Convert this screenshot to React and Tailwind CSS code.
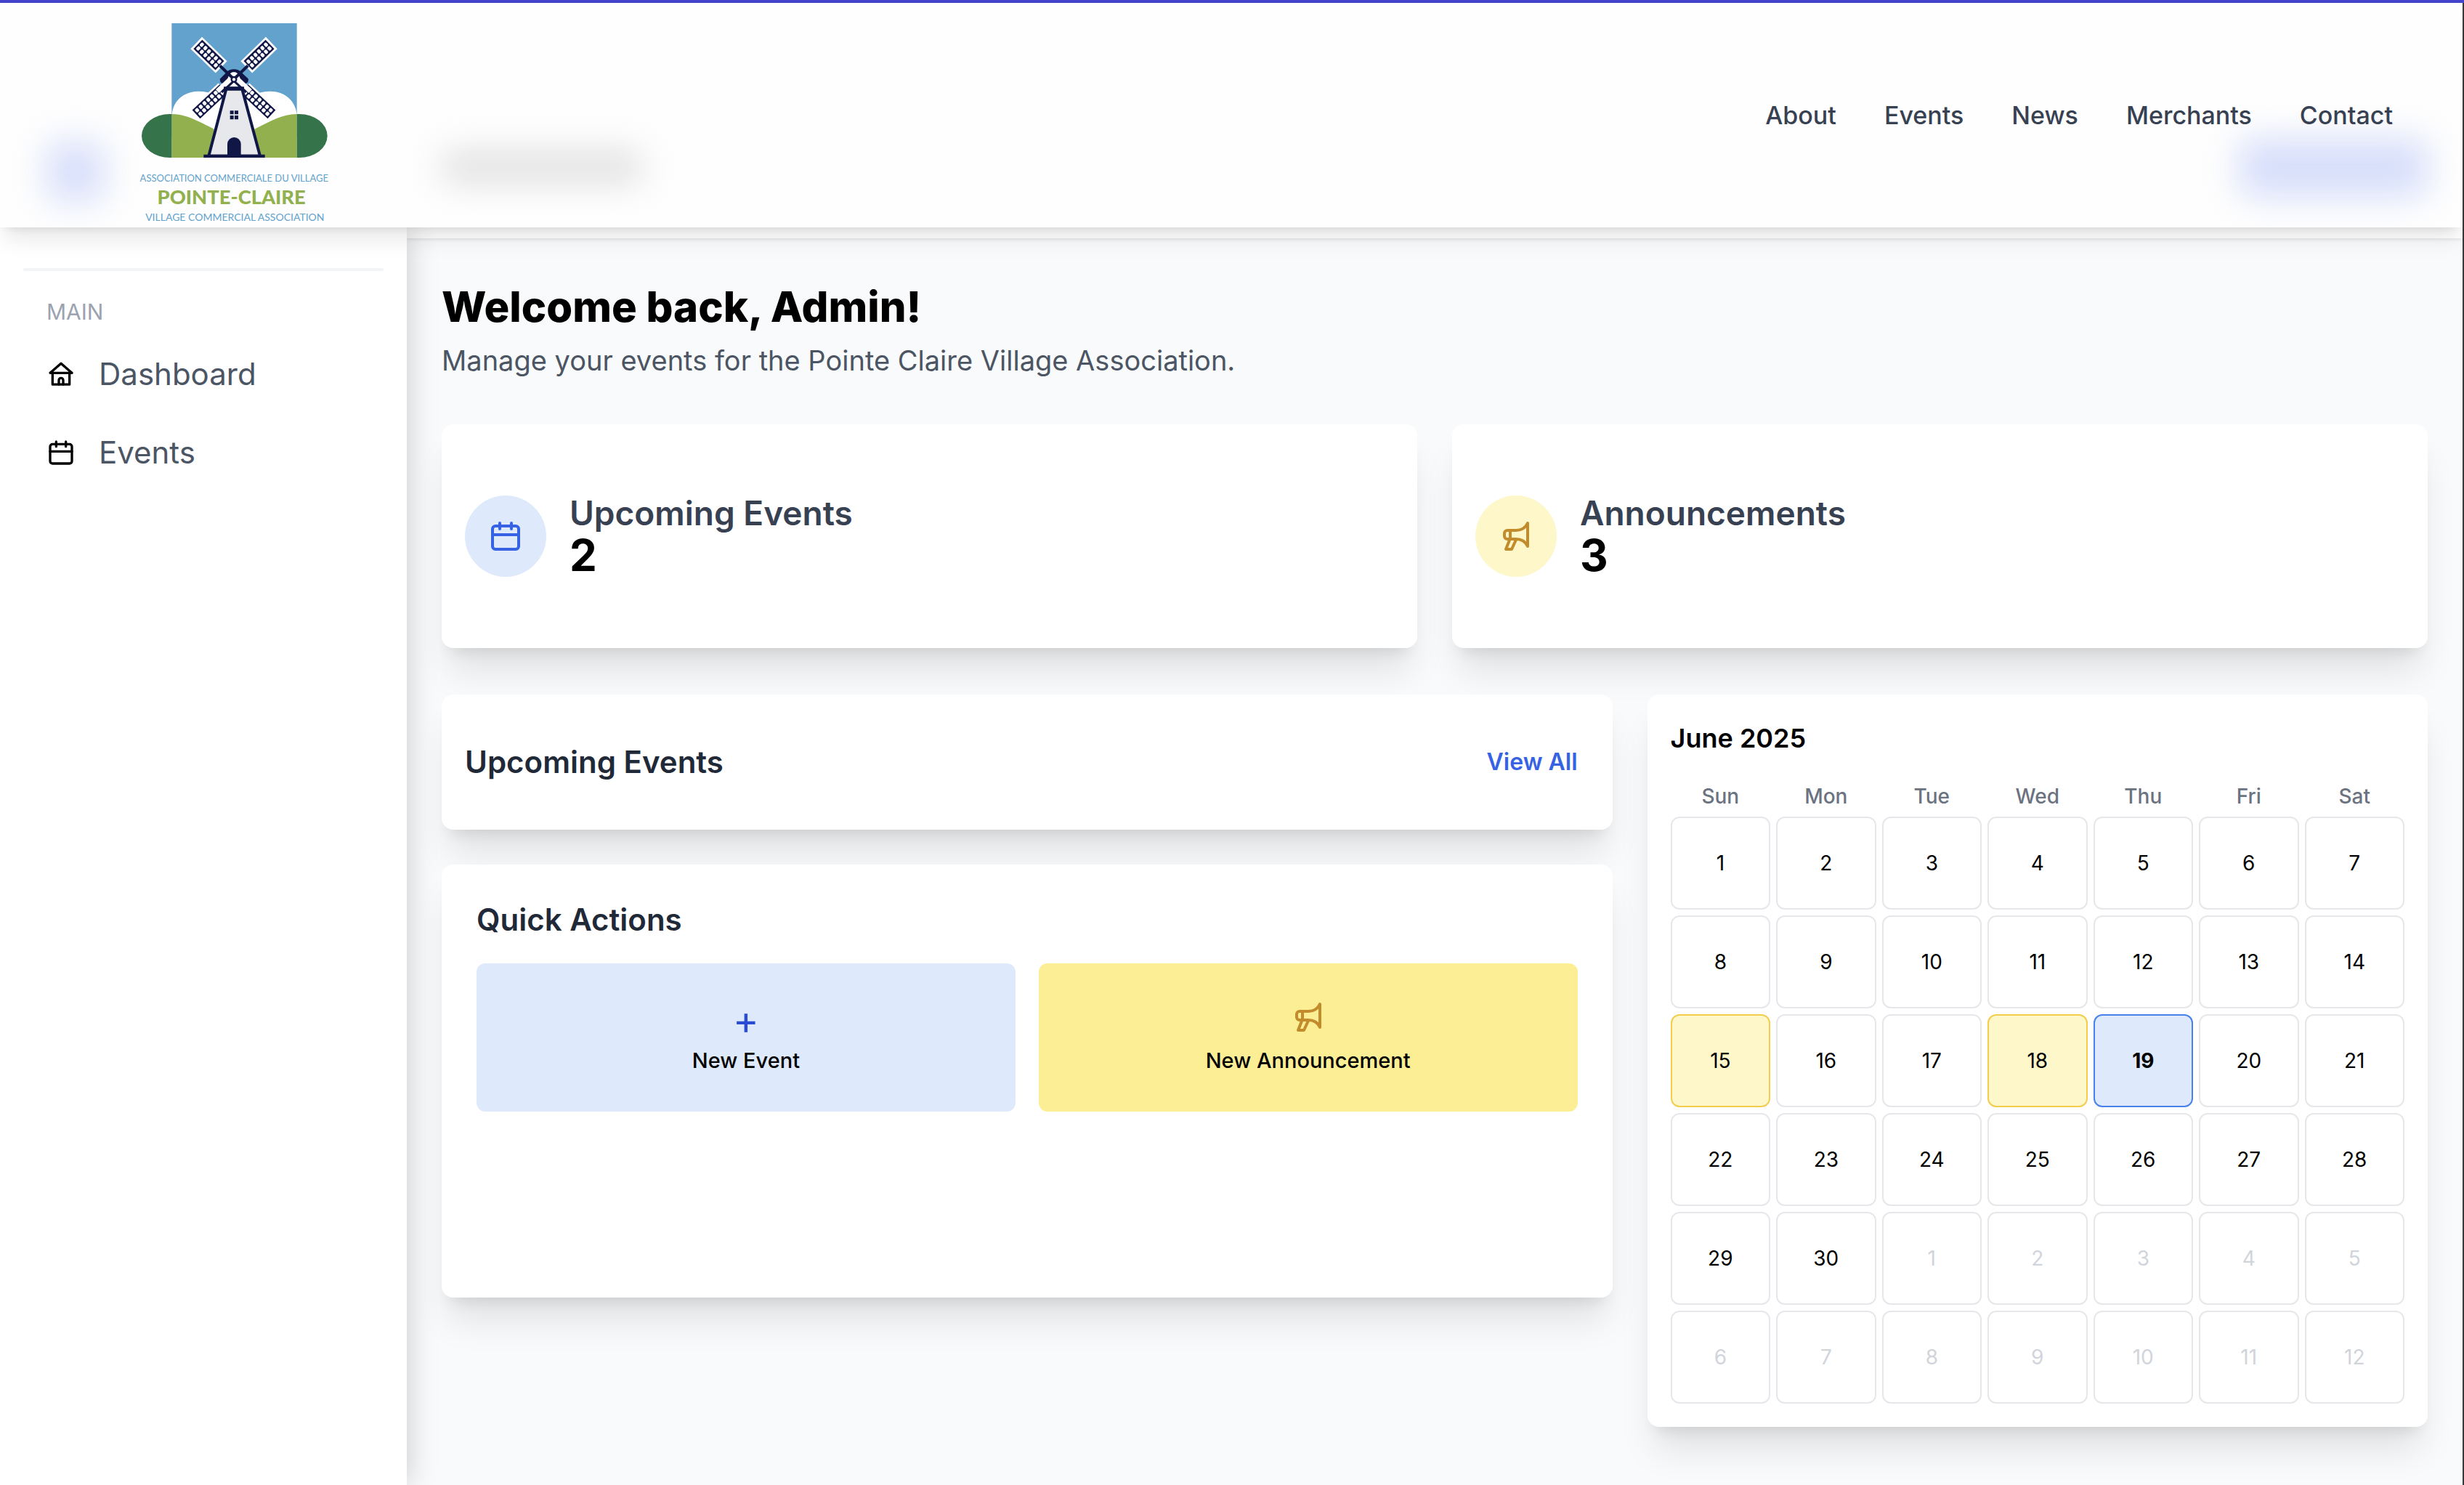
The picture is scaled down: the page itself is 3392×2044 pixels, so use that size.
import React from "react";

const cardShadow =
  "shadow-[0_40px_50px_-10px_rgba(0,0,0,0.1),0_16px_20px_-12px_rgba(0,0,0,0.1)]";

const NAV_LINKS = ["About", "Events", "News", "Merchants", "Contact"];
const WEEKDAYS = ["Sun", "Mon", "Tue", "Wed", "Thu", "Fri", "Sat"];
const EVENT_DAYS = [15, 18];
const TODAY = 19;

const DAYS = Array.from({ length: 42 }, (_, i) => ({
  day: i < 30 ? i + 1 : i - 29,
  current: i < 30,
}));

function Icon({ className, children }) {
  return (
    <svg
      viewBox="0 0 24 24"
      fill="none"
      stroke="currentColor"
      strokeWidth="2"
      strokeLinecap="round"
      strokeLinejoin="round"
      aria-hidden="true"
      className={className}
    >
      {children}
    </svg>
  );
}

function HomeIcon({ className }) {
  return (
    <Icon className={className}>
      <path d="M12 3.200 21 11H3z" />
      <path d="M5 11v9.500h14V11" />
      <path d="M10.200 20.500V17a1.800 1.800 0 0 1 3.600 0v3.500" />
    </Icon>
  );
}

function CalendarIcon({ className }) {
  return (
    <Icon className={className}>
      <rect x="3" y="5" width="18" height="16" rx="2" />
      <path d="M3 11h18M8 3v4M16 3v4" />
    </Icon>
  );
}

function MegaphoneIcon({ className }) {
  return (
    <Icon className={className}>
      <path d="M20 3v16c-1.500-3.300-4.500-5-8-5H6a2 2 0 0 1-2-2v-2a2 2 0 0 1 2-2h6c3.500 0 6.500-1.700 8-5z" />
      <path d="M8 8v6" />
      <path d="M7.600 14.500 5 21h4l3-6.500" />
    </Icon>
  );
}

function UpperBlade({ transform }) {
  return (
    <g transform={transform}>
      <rect x="-34" y="-216" width="68" height="144" fill="#fff" />
      <path d="M0 0V-80" stroke="#101746" strokeWidth="12" />
      <rect x="-26" y="-207" width="52" height="126" fill="#101746" />
      {[0, 1].map((col) =>
        [0, 1, 2, 3, 4, 5].map((row) => (
          <rect
            key={`${col}-${row}`}
            x={-19 + col * 21}
            y={-201 + row * 20}
            width="17"
            height="14"
            rx="5"
            fill="#fff"
          />
        ))
      )}
    </g>
  );
}

function LowerBlade({ transform }) {
  return (
    <g transform={transform}>
      <rect x="10" y="-170" width="22" height="112" fill="#fff" />
      <rect x="-24" y="-213" width="48" height="155" fill="#101746" />
      {[0, 1].map((col) =>
        [0, 1, 2, 3, 4, 5, 6].map((row) => (
          <rect
            key={`${col}-${row}`}
            x={-18 + col * 20}
            y={-206 + row * 21}
            width="16"
            height="15"
            rx="5"
            fill="#fff"
          />
        ))
      )}
    </g>
  );
}

function LowerArm({ transform }) {
  return (
    <g transform={transform}>
      <path d="M10 -8V-84" stroke="#fff" strokeWidth="20" />
      <path d="M-5 -8V-74" stroke="#101746" strokeWidth="9" />
    </g>
  );
}

const MIRROR = "translate(972 0) scale(-1 1)";
const LOWER_LEFT = "translate(486 327) rotate(-133)";

function Logo() {
  return (
    <svg
      viewBox="0 12 990 927"
      role="img"
      aria-label="Pointe-Claire Village Commercial Association"
      className="relative h-[309px] w-[330px]"
    >
      <rect x="229" y="96" width="517" height="470" fill="#62a2cc" />
      <path
        d="M230 472C236 415 280 377 340 377c50 0 90 20 110 50h76c20-30 60-50 110-50 60 0 104 38 110 95v178H230z"
        fill="#fff"
      />
      <path d="M229 471c60 0 110 30 175 62v118H229z" fill="#92b04d" />
      <path d="M746 471c-60 0-110 30-175 62v118h175z" fill="#92b04d" />
      <path d="M229 471h-8a116 90 0 0 0 0 180h8z" fill="#35734b" />
      <path d="M746 471h10a116 90 0 0 1 0 180h-10z" fill="#35734b" />
      <LowerBlade transform={LOWER_LEFT} />
      <g transform={MIRROR}>
        <LowerBlade transform={LOWER_LEFT} />
      </g>
      <path
        d="M454 368h66l74 276H382z"
        fill="#e7e8eb"
        stroke="#101746"
        strokeWidth="12"
      />
      <path
        d="M428 326l28-28c12-16 48-16 60 0l30 28-2 12-22 20h-70l-22-20z"
        fill="#101746"
      />
      <path d="M464 314c6-22 38-22 44 0l16 44h-76z" fill="#fff" />
      <LowerArm transform={LOWER_LEFT} />
      <g transform={MIRROR}>
        <LowerArm transform={LOWER_LEFT} />
      </g>
      <path d="M444 358h84v14h-84z" fill="#101746" />
      <UpperBlade transform="translate(486 327) rotate(-46)" />
      <UpperBlade transform="translate(486 327) rotate(46)" />
      <path d="M361 638h253v13H361z" fill="#101746" />
      <path d="M459 645v-50a28 28 0 0 1 56 0v50z" fill="#101746" />
      <path
        d="M470 457h15v15h-15zM489 457h15v15h-15zM470 477h15v16h-15zM489 477h15v16h-15z"
        fill="#101746"
      />
      <circle cx="486" cy="328" r="10" fill="#fff" stroke="#101746" strokeWidth="7" />
      <g textAnchor="middle" fontFamily="Lato, sans-serif">
        <text x="487" y="750" fontSize="39" fill="#62a2cc">
          ASSOCIATION COMMERCIALE DU VILLAGE
        </text>
        <text x="476" y="843" fontSize="82" fontWeight="900" fill="#92b04d">
          POINTE-CLAIRE
        </text>
        <text x="490" y="911" fontSize="42" fill="#62a2cc">
          VILLAGE COMMERCIAL ASSOCIATION
        </text>
      </g>
    </svg>
  );
}

function Header() {
  return (
    <header className="relative z-20 flex h-[309px] items-center justify-between bg-[#fefefe] pr-24 pl-40 shadow-[0_20px_30px_-6px_rgba(0,0,0,0.1),0_8px_12px_-8px_rgba(0,0,0,0.1)]">
      <div aria-hidden="true" className="absolute inset-0 overflow-hidden">
        <div className="absolute top-[192px] left-16 h-20 w-20 rounded-2xl bg-[#d6defa] blur-xl" />
        <div className="absolute top-[206px] left-[608px] h-10 w-[276px] rounded-2xl bg-[#dcdcdc] blur-xl" />
        <div className="absolute top-[187px] right-12 h-20 w-[260px] rounded-2xl bg-[#d6defa] blur-xl" />
      </div>
      <Logo />
      <nav className="relative flex gap-[66px] text-[34px] leading-[48px] font-medium text-[#374151]">
        {NAV_LINKS.map((label) => (
          <a key={label} href="#">
            {label}
          </a>
        ))}
      </nav>
    </header>
  );
}

function Sidebar() {
  const items = [
    ["Dashboard", HomeIcon],
    ["Events", CalendarIcon],
  ];
  return (
    <aside className="relative z-10 w-[560px] shrink-0 bg-white px-8 pt-14 shadow-[0_0_40px_rgba(0,0,0,0.2)]">
      <hr className="h-1 rounded-full border-0 bg-[#f3f4f6]" />
      <p className="mt-9 px-8 text-[30px] leading-[40px] text-[#9ca3af]">MAIN</p>
      <nav className="mt-3">
        {items.map(([label, ItemIcon]) => (
          <a key={label} href="#" className="flex h-[108px] items-center gap-8 px-8 text-[42px] leading-[56px] text-[#4b5563]">
            <ItemIcon className="h-10 w-10 text-black" />
            {label}
          </a>
        ))}
      </nav>
    </aside>
  );
}

function StatCard({ title, value, icon, tone }) {
  return (
    <section className={`flex h-[308px] flex-1 items-center gap-8 rounded-2xl bg-white p-8 ${cardShadow}`}>
      <div className={`rounded-full p-8 ${tone}`}>{icon}</div>
      <div>
        <h2 className="text-[46px] leading-[52px] font-semibold text-[#374151]">{title}</h2>
        <p className="text-[60px] leading-[64px] font-bold">{value}</p>
      </div>
    </section>
  );
}

function QuickAction({ label, tone, children }) {
  return (
    <button type="button" className={`flex flex-1 flex-col items-center gap-4 rounded-xl py-[50px] ${tone}`}>
      {children}
      <span className="text-[29px] leading-[40px] font-medium text-black">{label}</span>
    </button>
  );
}

function dayTone({ day, current }) {
  if (!current) return "border-[#e5e7eb] text-[#d1d5db]";
  if (day === TODAY) return "border-[#4880ee] bg-[#dee9fb] font-bold";
  if (EVENT_DAYS.includes(day)) return "border-[#f3cd4b] bg-[#fdf7c9]";
  return "border-[#e5e7eb]";
}

function Calendar() {
  return (
    <section className={`rounded-2xl bg-white p-8 ${cardShadow}`}>
      <h2 className="mb-8 text-[36px] leading-[56px] font-semibold">June 2025</h2>
      <div className="mb-2 grid grid-cols-7 gap-2 text-center text-[28px] leading-[40px] font-medium text-[#6b7280]">
        {WEEKDAYS.map((name) => (
          <div key={name}>{name}</div>
        ))}
      </div>
      <div className="grid grid-cols-7 gap-2 text-[28px]">
        {DAYS.map((cell, i) => (
          <div
            key={i}
            className={`flex h-32 items-center justify-center rounded-xl border-2 ${dayTone(cell)}`}
          >
            {cell.day}
          </div>
        ))}
      </div>
    </section>
  );
}

export default function App() {
  return (
    <div className="flex min-h-screen flex-col border-t-4 border-[#4543cb] bg-[#f9fafb] font-['Inter',sans-serif] text-black">
      <div className="flex flex-1 flex-col border-r-2 border-[#3a3a3c]">
        <Header />
        <div className="flex flex-1">
          <Sidebar />
          <div className="min-w-0 flex-1">
            <div className="h-[15px] bg-white shadow-[0_2px_4px_rgba(0,0,0,0.08)]" />
            <main className="p-12">
              <h1 className="text-[58px] leading-[92px] font-extrabold">Welcome back, Admin!</h1>
              <p className="mb-[60px] text-[38px] leading-[56px] text-[#4b5563]">
                Manage your events for the Pointe Claire Village Association.
              </p>
              <div className="mb-16 flex gap-12">
                <StatCard
                  title="Upcoming Events"
                  value="2"
                  tone="bg-[#dee9fb] text-[#3662e3]"
                  icon={<CalendarIcon className="h-12 w-12" />}
                />
                <StatCard
                  title="Announcements"
                  value="3"
                  tone="bg-[#fdf7c9] text-[#c28b2c]"
                  icon={<MegaphoneIcon className="h-12 w-12" />}
                />
              </div>
              <div className="grid grid-cols-[3fr_2fr] items-start gap-12">
                <div className="flex flex-col gap-12">
                  <section className={`flex items-center justify-between rounded-2xl bg-white py-16 pr-12 pl-8 ${cardShadow}`}>
                    <h2 className="text-[42px] leading-[58px] font-semibold text-[#1f2937]">Upcoming Events</h2>
                    <a href="#" className="text-[32px] leading-[48px] font-semibold text-[#3662e3]">
                      View All
                    </a>
                  </section>
                  <section className={`min-h-[596px] rounded-2xl bg-white p-12 ${cardShadow}`}>
                    <h2 className="mb-8 text-[42px] leading-[56px] font-semibold text-[#1f2937]">Quick Actions</h2>
                    <div className="flex gap-8">
                      <QuickAction label="New Event" tone="bg-[#dee9fb]">
                        <span aria-hidden="true" className="h-12 text-[54px] leading-[56px] text-[#2a4cd2]">
                          +
                        </span>
                      </QuickAction>
                      <QuickAction label="New Announcement" tone="bg-[#fcee95]">
                        <MegaphoneIcon className="h-12 w-12 text-[#c28b2c]" />
                      </QuickAction>
                    </div>
                  </section>
                </div>
                <Calendar />
              </div>
            </main>
          </div>
        </div>
      </div>
    </div>
  );
}
